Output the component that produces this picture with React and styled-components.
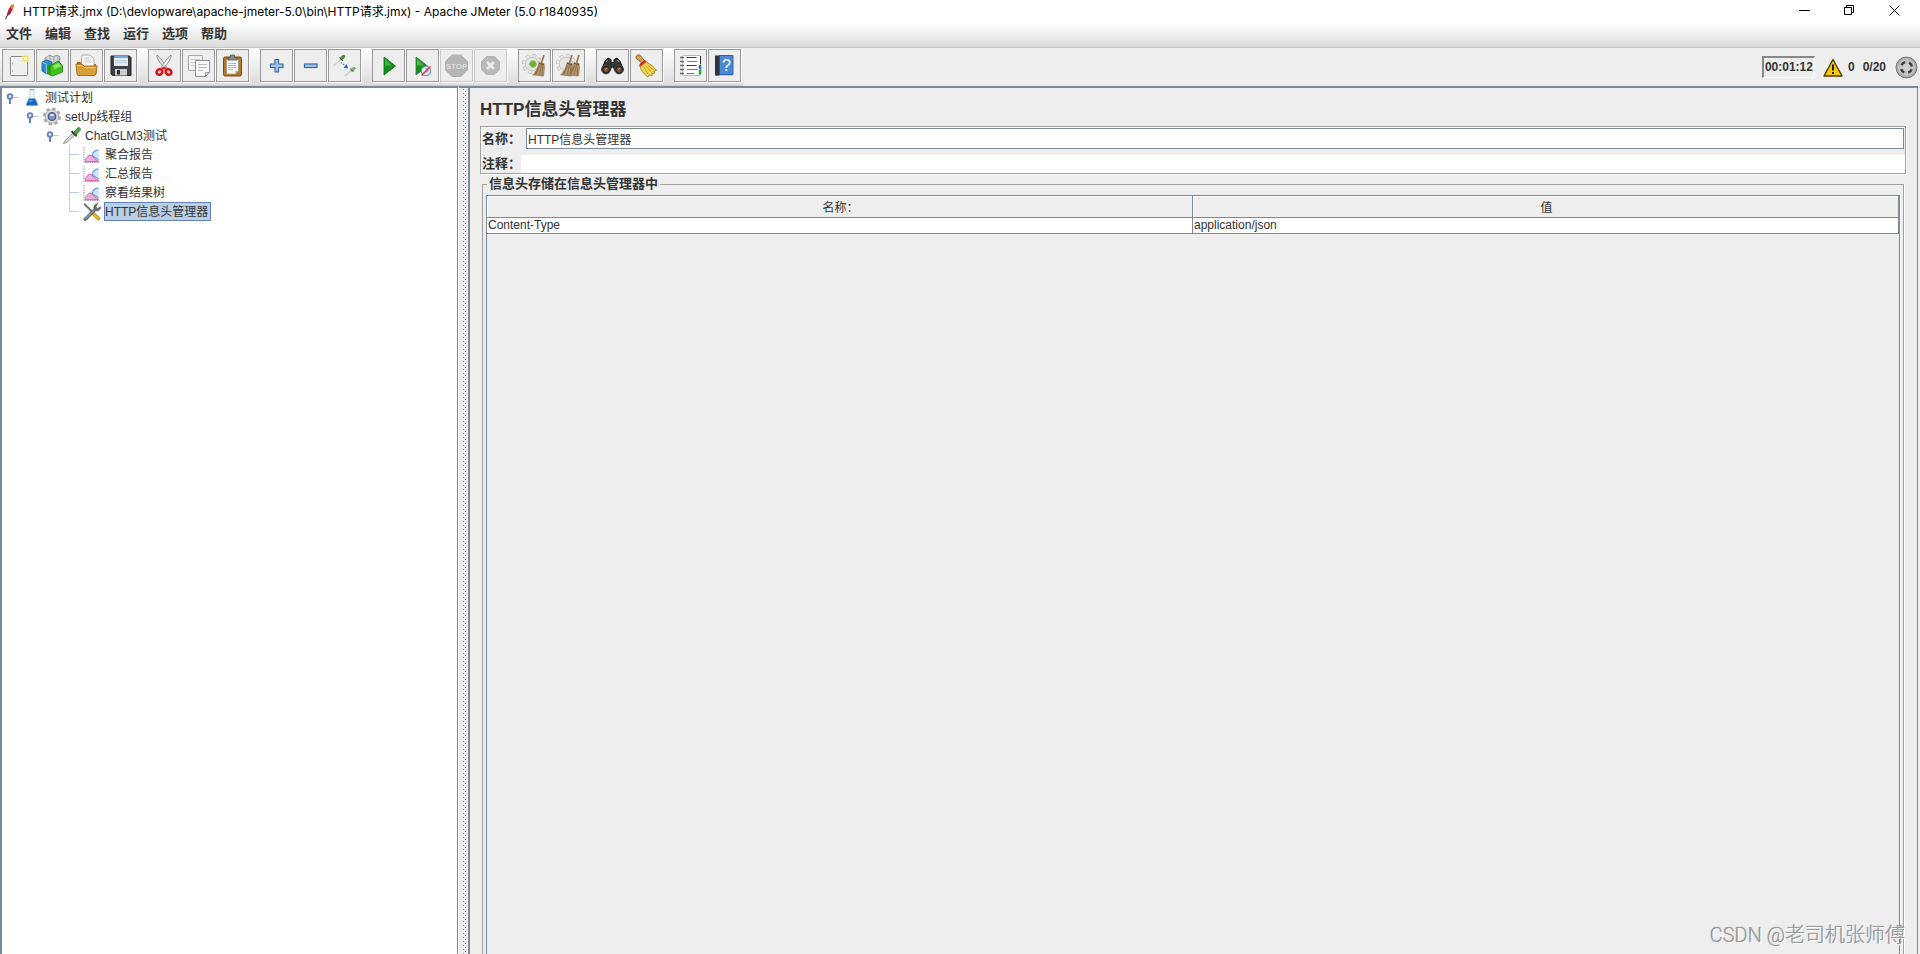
/**
 * ============================================================================
 * JMETER MAIN WINDOW
 * ============================================================================
 *
 * Swing "Metal" style window.
 *
 * Contains:
 * - Title bar, menu bar and toolbar
 * - Test plan tree (left)
 * - HTTP header manager form (right)
 */

import { useState } from 'react';
import styled, { createGlobalStyle } from 'styled-components';

// ============================================================================
// CONSTANTS
// ============================================================================

const UI_FONT = "'Liberation Sans', 'Noto Sans CJK SC', sans-serif";
const METAL = '#7a8a99';
const PANEL = '#eeeeee';
const ETCH = '#a0a0a0';
const GUIDE = '#b8cfe5';
const TEXT = '#333333';

const MENUS = ['文件', '编辑', '查找', '运行', '选项', '帮助'];

const TREE = [
  { id: 'plan', label: '测试计划', icon: 'flask', depth: 0, open: true },
  { id: 'group', label: 'setUp线程组', icon: 'gear', depth: 1, open: true },
  { id: 'sampler', label: 'ChatGLM3测试', icon: 'dropper', depth: 2, open: true },
  { id: 'aggregate', label: '聚合报告', icon: 'chart', depth: 3 },
  { id: 'summary', label: '汇总报告', icon: 'chart', depth: 3 },
  { id: 'results', label: '察看结果树', icon: 'chart', depth: 3 },
  { id: 'headers', label: 'HTTP信息头管理器', icon: 'tools', depth: 3, last: true },
];

const HEADERS = [{ name: 'Content-Type', value: 'application/json' }];

// ============================================================================
// ICONS
// ============================================================================

const Gear = () => (
  <>
    <circle cx="10" cy="11" r="8" stroke="#b4b4b4" strokeWidth="4" strokeDasharray="3.6 2.68" />
    <circle cx="10" cy="11" r="8" stroke="#ececec" strokeWidth="2.6" strokeDasharray="3 3.28" strokeDashoffset="-.3" />
    <circle cx="10" cy="11" r="6.8" fill="#e4e4e4" stroke="#bcbcbc" strokeWidth=".8" />
  </>
);

const Bristles = () => (
  <>
    <path d="M22 2l-2.500 8" stroke="#9a7044" strokeWidth="1.600" />
    <path d="M17 9.500l5 1 .5 4-1 8.500-11-1c3.500-3 5.500-7 6.500-12.500z" fill="#b8976b" stroke="#8f6f46" strokeWidth=".6" />
    <path d="M18 12l-4.500 10M19.500 12l-2.500 10.500M21 12l-1 11M16.500 14.500l-3.500 6.500" stroke="#7d5f3b" strokeWidth=".7" />
    <path d="M17 10.500l5 1" stroke="#6b4c28" />
  </>
);

const TOOL_ICONS = {
  new: (
    <>
      <rect x="4.500" y="3.500" width="17" height="19" rx="1" fill="#efefef" stroke="#858585" />
      <rect x="5.500" y="4.500" width="15" height="17" stroke="#fff" />
      <path d="M6.500 9v3M6.500 17v2" stroke="#b5b5b5" />
      <circle cx="19.500" cy="5.500" r="4" fill="#fdf3a8" opacity=".8" />
      <circle cx="19.500" cy="5.500" r="2.300" fill="#fff" stroke="#f0dc4e" strokeWidth="1.300" />
    </>
  ),
  templates: (
    <>
      <path d="M5 5l5-3 3 2 4-2 3 2-1 9H5z" fill="#b9bfc2" stroke="#7f8789" strokeWidth=".8" />
      <path d="M8 3v8M12 4v7M16 3v7" stroke="#eef0f0" />
      <path d="M2 9l5-2 5 2v11l-5 1-5-3z" fill="#2f8fc4" stroke="#175f8c" strokeWidth=".8" />
      <path d="M2.500 9.500l4 1.500v9.500" stroke="#8fd0ef" />
      <path d="M7 13l6-2.500V20l-3 2.500-3-2z" fill="#26a015" />
      <path d="M10 13l8-5 4.500 4.500V19l-10 4-2.500-1z" fill="#3fc41e" stroke="#1d7d10" strokeWidth=".8" />
      <path d="M13 13l5-3 3.500 3-7 3z" fill="#93ea66" />
    </>
  ),
  open: (
    <>
      <path d="M3 9h6l2 2h11v11H3z" fill="#a96f12" />
      <path d="M7 14L8 2h8l4 4v9z" fill="#fafafa" stroke="#999" strokeWidth=".8" />
      <path d="M10 5h5M10 7h7M10 9h7" stroke="#b5b5b5" strokeWidth=".8" />
      <path d="M2 11h6l2 2h13l-1 8-1 1.500H4L3 21z" fill="#d9a03a" stroke="#9c6a14" strokeWidth=".9" />
      <path d="M3.500 12.500H8l2 2h11.500" stroke="#f0c978" />
    </>
  ),
  save: (
    <>
      <path d="M3 3h18.500L23 4.500V22.500H4.500L3 21z" fill="#3d3f42" stroke="#202224" />
      <rect x="6" y="3" width="14" height="10" fill="#e3ebf5" />
      <path d="M6 3h14v2H6z" fill="#79a3d1" />
      <path d="M7 7.500h12M7 9.500h12" stroke="#b4c6da" strokeWidth=".8" />
      <rect x="7" y="16" width="12" height="6.500" fill="#c9cccf" />
      <rect x="9" y="17" width="3" height="4.500" fill="#2c2e31" />
    </>
  ),
  cut: (
    <>
      <path d="M5 2c-1 3 5 11 9 15l1.500-1.500C12 10 8 4 5 2z" fill="#e4e4e4" stroke="#858585" strokeWidth=".9" />
      <path d="M19 2c1 3-5 11-9 15l-1.500-1.500C12 10 16 4 19 2z" fill="#f2f2f2" stroke="#858585" strokeWidth=".9" />
      <ellipse cx="7.500" cy="19" rx="3" ry="2.600" transform="rotate(-35 7.500 19)" stroke="#d8141c" strokeWidth="2.600" />
      <ellipse cx="16.500" cy="19" rx="3" ry="2.600" transform="rotate(35 16.500 19)" stroke="#d8141c" strokeWidth="2.600" />
      <path d="M10 16l2-1.500 2 1.500" stroke="#d8141c" strokeWidth="2" />
    </>
  ),
  copy: (
    <>
      <path d="M2.500 2.500h14v15h-14z" fill="#f3f3f3" stroke="#a6a6a6" />
      <path d="M5 6.500h9M5 9.500h6M5 12.500h4" stroke="#c6c6c6" />
      <path d="M9.500 7.500h14v12l-4 4h-10z" fill="#f8f8f8" stroke="#8f8f8f" />
      <path d="M12 11.500h9M12 14.500h9M12 17.500h5" stroke="#bbb" />
      <path d="M23.500 19.500h-4v4z" fill="#d3d3d3" stroke="#8f8f8f" strokeWidth=".8" />
    </>
  ),
  paste: (
    <>
      <rect x="3.500" y="4" width="18" height="19" rx="1.500" fill="#b6781a" stroke="#7a4d0b" />
      <path d="M6.500 6.500h12v11l-3.500 3.500H6.500z" fill="#f7f7f7" stroke="#8d8d8d" strokeWidth=".7" />
      <path d="M8 10.500h8M8 12.500h8M8 14.500h8M8 16.500h5" stroke="#aaa" strokeWidth=".8" />
      <path d="M18.500 17.500H15V21z" fill="#c7c7c7" />
      <path d="M8 7V4.500h2.500V2h4v2.500H17V7z" fill="#8b8e89" stroke="#4f514d" strokeWidth=".8" />
    </>
  ),
  expand: (
    <path d="M11 6.500h3.500V11H19v3.500h-4.500V19H11v-4.500H6.500V11H11z" fill="#a5c3e6" stroke="#3b68a8" strokeWidth="1.200" />
  ),
  collapse: <rect x="6.500" y="11" width="12.500" height="3.500" fill="#a5c3e6" stroke="#3b68a8" strokeWidth="1.200" />,
  toggle: (
    <>
      <path d="M1.500 13l8-7" stroke="#cdd1cd" strokeWidth="1.600" />
      <path d="M9.500 5.500l2-2" stroke="#4e8c45" strokeWidth="3.400" strokeLinecap="round" />
      <path d="M7.500 4.500l3.500 3.500" stroke="#3c5a38" />
      <path d="M5 13l8 7" stroke="#e1e7ee" strokeWidth="1.500" />
      <path d="M9 9.500l4 3.500" stroke="#5f8ee0" strokeWidth="1.300" strokeDasharray="1.500 1" />
      <path d="M16 15.500l-4.500-.8 3.300-3.500z" fill="#1d5fe0" />
      <path d="M13 23l7-6" stroke="#c9cdc9" strokeWidth="1.600" />
      <path d="M20 17l2-1.500" stroke="#7fae74" strokeWidth="3.400" strokeLinecap="round" />
      <path d="M18.500 15.500l3 3.500" stroke="#55704f" />
    </>
  ),
  start: (
    <>
      <path d="M8 4l11.500 9L8 22z" fill="#138f1b" stroke="#0a6a12" strokeWidth=".8" />
      <path d="M9 6l7 6.500H9z" fill="#43b13f" />
    </>
  ),
  startNoPause: (
    <>
      <path d="M6 4l11.500 9L6 22z" fill="#138f1b" stroke="#2e7d35" strokeWidth=".8" />
      <path d="M7 6l7 6.500H7z" fill="#55b552" />
      <circle cx="16" cy="18" r="4.600" fill="#e8eef6" stroke="#7993ba" strokeWidth="1.200" />
      <path d="M16 15v3h3" stroke="#7993ba" />
      <path d="M11.500 22.500l9-9" stroke="#d93030" strokeWidth="1.500" />
    </>
  ),
  stop: (
    <>
      <path d="M8 2h9l6.500 6.500v8.500L17 23.500H8L1.500 17V8.500z" fill="#b5b5b5" stroke="#b0b0b0" />
      <text x="12.500" y="16" textAnchor="middle" fontFamily={UI_FONT} fontWeight="700" fontSize="8" fill="#dedede">
        STOP
      </text>
    </>
  ),
  shutdown: (
    <>
      <path d="M8.500 3.500h8l5 5v8l-5 5h-8l-5-5v-8z" fill="#b9b9b9" stroke="#b4b4b4" />
      <path d="M9 9l7 7M16 9l-7 7" stroke="#ececec" strokeWidth="2.600" />
    </>
  ),
  clear: (
    <>
      <Gear />
      <circle cx="11" cy="11" r="3.300" fill="#62b51f" stroke="#9ab884" />
      <Bristles />
    </>
  ),
  clearAll: (
    <>
      <Gear />
      <g transform="translate(-6 0)"><Bristles /></g>
      <g transform="translate(1 0)"><Bristles /></g>
    </>
  ),
  search: (
    <>
      <path d="M5 8l3-3 3 1.500v3h3v-3L17 5l3 3 3.500 9h-9l-1-3h-2l-1 3h-9z" fill="#343434" stroke="#1b1b1b" />
      <circle cx="6" cy="16.500" r="4.400" fill="#222" stroke="#4b4b4b" />
      <circle cx="19" cy="16.500" r="4.400" fill="#222" stroke="#4b4b4b" />
      <circle cx="6" cy="16.500" r="2.600" fill="#7d4a32" />
      <circle cx="19" cy="16.500" r="2.600" fill="#7d4a32" />
      <path d="M6 9l2-2M17 7l2 2" stroke="#909090" />
      <path d="M5 16.500l2-1M18 16.500l2-1" stroke="#cfa78f" />
    </>
  ),
  resetSearch: (
    <>
      <path d="M2 4.500C2 1.500 6 1 7 3.500l3.500 4-3 2.500L4 6.500C3 6.500 2 5.800 2 4.500z" fill="#d6a24a" stroke="#7c5513" strokeWidth=".9" />
      <path d="M5.500 12L11 7.500l2 2c4 2 7 4.500 9.500 8l-2.500.5.500 2-2.500.5v2l-3-.5-1 2C9.500 21 6.500 16.500 5.500 12z" fill="#f2d552" stroke="#a67f16" strokeWidth=".9" />
      <path d="M5.500 11l5.500-4 1.500 2-6 4.500z" fill="#d62a26" />
      <path d="M9.500 13.500l4.500 7.500M11.500 12.500l6 7M13.500 12l6 5" stroke="#b98f20" strokeWidth=".8" />
    </>
  ),
  functions: (
    <>
      <rect x="4.500" y="2.500" width="18" height="20" rx="1" fill="#fff" stroke="#b9b9b9" />
      <path d="M22.500 3v8" stroke="#2c2c2c" />
      <path d="M22 12v4" stroke="#2672c9" strokeWidth="2.500" />
      <path d="M22 16.500v5" stroke="#21a04a" strokeWidth="2.500" />
      <path d="M8.500 4.500h10M8.500 12.500h10" stroke="#3d3d3d" />
      <path d="M9.500 8.500h10M9.500 16.500h10M8.500 20.500h8" stroke="#4a80d0" />
      <path d="M2 4.500h4M2 8.500h4M2 12.500h4M2 16.500h4M2 20.500h4" stroke="#666" strokeWidth="1.400" />
    </>
  ),
  help: (
    <>
      <path d="M4 3h3v19.500H4z" fill="#272b33" />
      <path d="M7 2.500h14v19H7z" fill="#4a88d2" stroke="#2a65ac" />
      <path d="M5 22h16v1H5z" fill="#c5cbd2" />
      <path d="M3 2.500h4.500v20H3z" fill="#2e3540" />
      <text x="14.500" y="18" textAnchor="middle" fontFamily={UI_FONT} fontSize="16" fill="#fff">?</text>
    </>
  ),
};

const TREE_ICONS = {
  flask: (
    <>
      <path d="M8 1.500h4v7l3.500 7.500c.5 1.500 0 2-1 2h-9c-1 0-1.500-.5-1-2L8 8.500z" fill="#eef4fa" stroke="#b4c0cc" strokeWidth=".8" />
      <path d="M7 11h6l2.800 5.500c.5 1.200-.3 2-1.300 2h-9c-1 0-1.800-.8-1.300-2z" fill="#1768c4" />
      <path d="M7.500 12.500h4l-4.500 3z" fill="#5ba5ea" />
      <path d="M7.500 1.500h5" stroke="#9aa6b2" />
    </>
  ),
  gear: (
    <>
      <circle cx="10" cy="10" r="8" fill="none" stroke="#a6a6a6" strokeWidth="2.800" strokeDasharray="3.500 2.780" />
      <circle cx="10" cy="10" r="7" fill="#e2e2e2" stroke="#a6a6a6" />
      <circle cx="10" cy="10" r="4" fill="#7f9ac4" stroke="#44597c" strokeWidth="1.400" />
      <path d="M8 9a3 3 0 0 1 4 0" stroke="#eaf1fb" fill="none" strokeWidth="1.400" />
    </>
  ),
  dropper: (
    <>
      <path d="M1 18.500L3 15l8-7.500 2 2-8 7.500z" fill="#d8dcd8" stroke="#7d827d" strokeWidth=".9" />
      <path d="M9.500 5.500l5.500 5.500" stroke="#2f3f2d" strokeWidth="2" />
      <path d="M12 6.500l4-4.500c1.500-1.200 3.800.8 2.500 2.500L14.500 9z" fill="#52a544" stroke="#2f6f28" strokeWidth=".9" />
    </>
  ),
  chart: (
    <>
      <path d="M1.500 2v16.500H18" stroke="#8f959d" fill="none" strokeDasharray="1.500 1" />
      <path d="M3 17.500v-2.500l4-4.500 3 1 3 3.500 4 2.500z" fill="#f0aedb" stroke="#de58ac" />
      <path d="M17 5.500c-3-.5-6 1.500-6.500 4.500 0 2 1.500 3 3 3.500 1.500.5 2.500 1.500 3.500 2.500z" fill="#d3e3fa" />
      <path d="M17 5.500c-3-.5-6 1.500-6.500 4.500 0 2 1.500 3 3 3.500 1.500.5 2.500 1.500 3.500 2.500" fill="none" stroke="#6f9de0" strokeWidth="1.300" />
    </>
  ),
  tools: (
    <>
      <path d="M1 2.500L2.500 1l9.500 9.500-1.500 1.500z" fill="#777" />
      <path d="M11.500 10.500l6.500 6c1 1.300-1 3.300-2.300 2l-6.200-6z" fill="#f0b51c" stroke="#9b7310" strokeWidth=".8" />
      <path d="M1.500 17.500L12 7c-.6-2.500 1-5 4-5.500l-2 3.500 2 2 3-2c0 3.500-2.500 4.800-5 4.200L4 19.300C2.600 20 .5 18.800 1.500 17.500z" fill="#6b6f73" stroke="#3d4043" strokeWidth=".6" />
      <path d="M3.500 17.500l9-9" stroke="#c4c8cb" strokeWidth=".8" />
    </>
  ),
};

const TOOLBAR = [
  [['new', '新建'], ['templates', '模板'], ['open', '打开'], ['save', '保存']],
  [['cut', '剪切'], ['copy', '复制'], ['paste', '粘贴']],
  [['expand', '展开'], ['collapse', '收起'], ['toggle', '切换']],
  [['start', '启动'], ['startNoPause', '不停顿启动'], ['stop', '停止', true], ['shutdown', '关闭', true]],
  [['clear', '清除'], ['clearAll', '清除全部']],
  [['search', '查找'], ['resetSearch', '重置查找']],
  [['functions', '函数助手'], ['help', '帮助']],
];

// ============================================================================
// STYLED COMPONENTS
// ============================================================================

const GlobalStyle = createGlobalStyle`
  * { box-sizing: border-box; }
  body {
    margin: 0;
    background: ${PANEL};
    color: ${TEXT};
    font: 12px/16px ${UI_FONT};
  }
  button, input { font: inherit; color: inherit; }
`;

const Window = styled.div`
  position: relative;
  display: flex;
  flex-direction: column;
  height: 100vh;
  overflow: hidden;
`;

const TitleBar = styled.header`
  display: flex;
  align-items: center;
  height: 23px;
  padding: 0 3px;
  background: #fff;
  color: #000;
`;

const TitleText = styled.h1`
  flex: 1;
  margin: 0 0 0 4px;
  font: 400 12px/16px Inter, 'Noto Sans CJK SC', sans-serif;
`;

const CaptionButton = styled.button`
  display: flex;
  align-items: center;
  justify-content: center;
  width: 45px;
  height: 20px;
  padding: 0 0 2px;
  border: 0;
  background: none;
`;

const MenuBar = styled.nav`
  display: flex;
  gap: 13px;
  height: 25px;
  padding: 0 6px;
  border-bottom: 1px solid #c8c8c8;
  background: linear-gradient(#fff, #dcdcdc);
`;

const MenuItem = styled.button`
  padding: 0 0 2px;
  border: 0;
  background: none;
  font-size: 13px;
  font-weight: 700;
`;

const ToolRow = styled.div`
  display: flex;
  justify-content: space-between;
  height: 38px;
`;

const ToolBar = styled.div`
  display: flex;
  gap: 11px;
  padding: 1px 2px 3px;
  border-bottom: 1px solid #d0d0d0;
  background: linear-gradient(#fff, #dcdcdc);
`;

const ToolGroup = styled.div`
  display: flex;
  gap: 1px;
`;

const ToolButton = styled.button`
  display: flex;
  align-items: center;
  justify-content: center;
  width: 33px;
  height: 33px;
  padding: 0;
  border: 1px solid ${props => (props.disabled ? '#c8c8c8' : '#999999')};
  background: ${PANEL};
  box-shadow: 1px 1px 0 #fff;
`;

const Status = styled.div`
  display: flex;
  align-items: center;
  padding-right: 2px;
  font-weight: 700;
`;

const Timer = styled.time`
  height: 22px;
  padding: 0 1px;
  border: solid;
  border-width: 2px 1px 1px 2px;
  border-color: #888 #fff #fff #888;
  line-height: 18px;
`;

const StatusButton = styled.button`
  display: flex;
  align-items: center;
  gap: 5px;
  margin-left: 8px;
  padding: 0;
  border: 0;
  background: none;
  font-weight: 700;
`;

const Threads = styled.span`
  margin: 0 9px 0 8px;
`;

const Main = styled.main`
  display: flex;
  flex: 1;
  min-height: 0;
`;

const TreePane = styled.aside`
  width: 458px;
  border: solid ${METAL};
  border-width: 2px 1px 0 2px;
  background: #fff;
`;

const TreeList = styled.ul`
  margin: 0;
  padding: 0;
  list-style: none;
`;

const TreeRow = styled.li`
  display: flex;
  align-items: center;
  height: 19px;
  padding-left: ${props => props.$depth * 20}px;
`;

const TreeIcon = styled.svg`
  flex: none;
  margin-right: 2px;
`;

const TreeLabel = styled.button`
  height: 19px;
  padding: 0 2px 0 0;
  border: 1px solid ${props => (props.$selected ? '#6382bf' : 'transparent')};
  background: ${props => (props.$selected ? '#b8cfe5' : 'none')};
  line-height: 16px;
  white-space: nowrap;
`;

const Splitter = styled.div`
  width: 10px;
  border-top: 2px solid ${METAL};
  border-left: 1px solid #fff;
  background:
    conic-gradient(from 270deg at 1px 1px, #7f8c9a 90deg, transparent 0) 4px 1px / 4px 4px repeat-y,
    conic-gradient(from 270deg at 1px 1px, #7f8c9a 90deg, transparent 0) 6px 3px / 4px 4px repeat-y,
    ${PANEL};
`;

const EditorPane = styled.section`
  display: flex;
  flex: 1;
  flex-direction: column;
  min-width: 0;
  margin-right: 2px;
  padding: 11px 11px 0 10px;
  border: solid ${METAL};
  border-width: 2px 1px 0 2px;
`;

const EditorTitle = styled.h2`
  margin: 0 0 5px;
  font-size: 17px;
  line-height: 22px;
`;

const NamePanel = styled.div`
  display: flex;
  flex-direction: column;
  gap: 6px;
  padding: 1px 0 0 1px;
  border: 1px solid ${ETCH};
  box-shadow: 1px 1px 0 #fff, inset 1px 1px 0 #fff;
`;

const FieldRow = styled.div`
  display: flex;
  align-items: center;
  gap: ${props => (props.$framed ? 5 : 0)}px;
  padding-right: ${props => (props.$framed ? 1 : 0)}px;
`;

const FieldLabel = styled.label`
  font-size: 13px;
  font-weight: 700;
  white-space: nowrap;
`;

const FieldInput = styled.input`
  flex: 1;
  min-width: 0;
  height: ${props => (props.$framed ? 21 : 18)}px;
  padding: 0 1px;
  border: ${props => (props.$framed ? `1px solid ${METAL}` : 0)};
  background: #fff;
  outline: 0;
`;

const HeaderGroup = styled.fieldset`
  flex: 1;
  min-width: 0;
  margin: 2px 2px 0;
  padding: 3px 3px 0;
  border: 1px solid ${ETCH};
  border-bottom: 0;
  box-shadow: 1px 0 0 #fff;
`;

const GroupTitle = styled.legend`
  margin-left: 1px;
  padding: 0 2px;
  font-size: 13px;
  font-weight: 700;
`;

const ScrollPane = styled.div`
  height: 100vh;
  border: 1px solid ${METAL};
  box-shadow: 1px 0 0 #fff;
`;

const HeaderTable = styled.table`
  width: 100%;
  table-layout: fixed;
  border-spacing: 0;

  th, td {
    border: solid ${METAL};
    border-width: 0 1px 1px 0;
    font-weight: 400;
  }

  th {
    height: 22px;
    padding: 2px 0 0 2px;
    box-shadow: inset 1px 1px 0 #fff;
  }

  td {
    height: 16px;
    padding: 0 1px;
    background: #fff;
    line-height: 15px;
  }
`;

const Watermark = styled.div`
  position: absolute;
  right: 15px;
  bottom: 6px;
  color: #9c9c9c;
  font: 300 20px/26px Roboto, 'Noto Sans CJK SC', sans-serif;
  text-shadow: 1px 1px 0 #fff, 0 0 1px #777;
  pointer-events: none;
`;

// ============================================================================
// PARTS
// ============================================================================

function FeatherLogo() {
  return (
    <svg width="16" height="18" viewBox="0 0 16 18" aria-hidden="true">
      <path d="M3.500 13.500L5 8c1-3 2.500-5.500 5.500-7 .5 4-1.500 8-4.500 11z" fill="#c8202f" />
      <path d="M7.500 4c1-1.500 2-2.500 3-3 .3 2 0 4-1 5.500z" fill="#e8842c" />
      <path d="M4.500 10.500L5.500 7l2.300 3L6 12z" fill="#8d2579" />
      <path d="M2.500 16.500L5 11" stroke="#55306b" />
    </svg>
  );
}

function TreeHandle({ open, last }) {
  return (
    <svg width="20" height="19" viewBox="0 0 20 19" aria-hidden="true">
      {open ? (
        <>
          <path d="M11 9.500h6" stroke={GUIDE} />
          <circle cx="8" cy="8.500" r="2.300" fill="#dce6f4" stroke="#6382bf" strokeWidth="1.800" />
          <path d="M8 11v5" stroke="#6382bf" strokeWidth="2" />
        </>
      ) : (
        <path d={last ? 'M7.500 0v9.500H17' : 'M7.500 0v19M7.500 9.500H17'} fill="none" stroke={GUIDE} />
      )}
    </svg>
  );
}

function CaptionButtons() {
  return (
    <>
      <CaptionButton aria-label="最小化">
        <svg width="11" height="11"><path d="M0 5.500h11" stroke="#000" /></svg>
      </CaptionButton>
      <CaptionButton aria-label="还原">
        <svg width="11" height="11">
          <path d="M.5 2.500h7v7h-7zM2.500 2.500V.5h7v7h-2" fill="none" stroke="#000" />
        </svg>
      </CaptionButton>
      <CaptionButton aria-label="关闭">
        <svg width="11" height="11"><path d="M.5.5l10 10M10.500.5l-10 10" stroke="#000" /></svg>
      </CaptionButton>
    </>
  );
}

function StatusArea() {
  return (
    <Status>
      <Timer>00:01:12</Timer>
      <StatusButton>
        <svg width="20" height="19" viewBox="0 0 20 19" aria-hidden="true">
          <path d="M10 1.500L19 18H1z" fill="#f8c800" stroke="#4b3c00" strokeWidth="1.400" strokeLinejoin="round" />
          <path d="M10 6.500v6M10 14v2" stroke="#1d1d1d" strokeWidth="2" />
        </svg>
        0
      </StatusButton>
      <Threads>0/20</Threads>
      <svg width="23" height="23" viewBox="0 0 23 23" aria-hidden="true">
        <circle cx="11.500" cy="11.500" r="10.500" fill="#a9a9a9" stroke="#777" />
        <circle cx="11.500" cy="11.500" r="8.500" fill="#c4c4c4" />
        <circle
          cx="11.500"
          cy="11.500"
          r="5.500"
          fill="none"
          stroke="#3d3d3d"
          strokeWidth="2.500"
          strokeDasharray="4.600 4.040"
          strokeDashoffset="-2"
        />
        <circle cx="11.500" cy="11.500" r="3.500" fill="#d0d0d0" />
      </svg>
    </Status>
  );
}

// ============================================================================
// COMPONENT
// ============================================================================

function App() {
  const [selected, setSelected] = useState('headers');

  return (
    <Window>
      <GlobalStyle />
      <TitleBar>
        <FeatherLogo />
        <TitleText>
          {'HTTP请求.jmx (D:\\devlopware\\apache-jmeter-5.0\\bin\\HTTP请求.jmx) - Apache JMeter (5.0 r1840935)'}
        </TitleText>
        <CaptionButtons />
      </TitleBar>

      <MenuBar>
        {MENUS.map(menu => <MenuItem key={menu}>{menu}</MenuItem>)}
      </MenuBar>

      <ToolRow>
        <ToolBar role="toolbar">
          {TOOLBAR.map(group => (
            <ToolGroup key={group[0][0]}>
              {group.map(([icon, label, disabled]) => (
                <ToolButton key={icon} aria-label={label} disabled={disabled}>
                  <svg width="25" height="25" viewBox="0 0 25 25" fill="none">{TOOL_ICONS[icon]}</svg>
                </ToolButton>
              ))}
            </ToolGroup>
          ))}
        </ToolBar>
        <StatusArea />
      </ToolRow>

      <Main>
        <TreePane>
          <TreeList>
            {TREE.map(node => (
              <TreeRow key={node.id} $depth={node.depth}>
                <TreeHandle open={node.open} last={node.last} />
                <TreeIcon width="20" height="19" viewBox="0 0 20 20">{TREE_ICONS[node.icon]}</TreeIcon>
                <TreeLabel $selected={selected === node.id} onClick={() => setSelected(node.id)}>
                  {node.label}
                </TreeLabel>
              </TreeRow>
            ))}
          </TreeList>
        </TreePane>

        <Splitter />

        <EditorPane>
          <EditorTitle>HTTP信息头管理器</EditorTitle>
          <NamePanel>
            <FieldRow $framed>
              <FieldLabel htmlFor="element-name">名称：</FieldLabel>
              <FieldInput id="element-name" $framed defaultValue="HTTP信息头管理器" />
            </FieldRow>
            <FieldRow>
              <FieldLabel htmlFor="element-comment">注释：</FieldLabel>
              <FieldInput id="element-comment" />
            </FieldRow>
          </NamePanel>

          <HeaderGroup>
            <GroupTitle>信息头存储在信息头管理器中</GroupTitle>
            <ScrollPane>
              <HeaderTable>
                <thead>
                  <tr>
                    <th>名称：</th>
                    <th>值</th>
                  </tr>
                </thead>
                <tbody>
                  {HEADERS.map(header => (
                    <tr key={header.name}>
                      <td>{header.name}</td>
                      <td>{header.value}</td>
                    </tr>
                  ))}
                </tbody>
              </HeaderTable>
            </ScrollPane>
          </HeaderGroup>
        </EditorPane>
      </Main>

      <Watermark>CSDN @老司机张师傅</Watermark>
    </Window>
  );
}

export default App;
